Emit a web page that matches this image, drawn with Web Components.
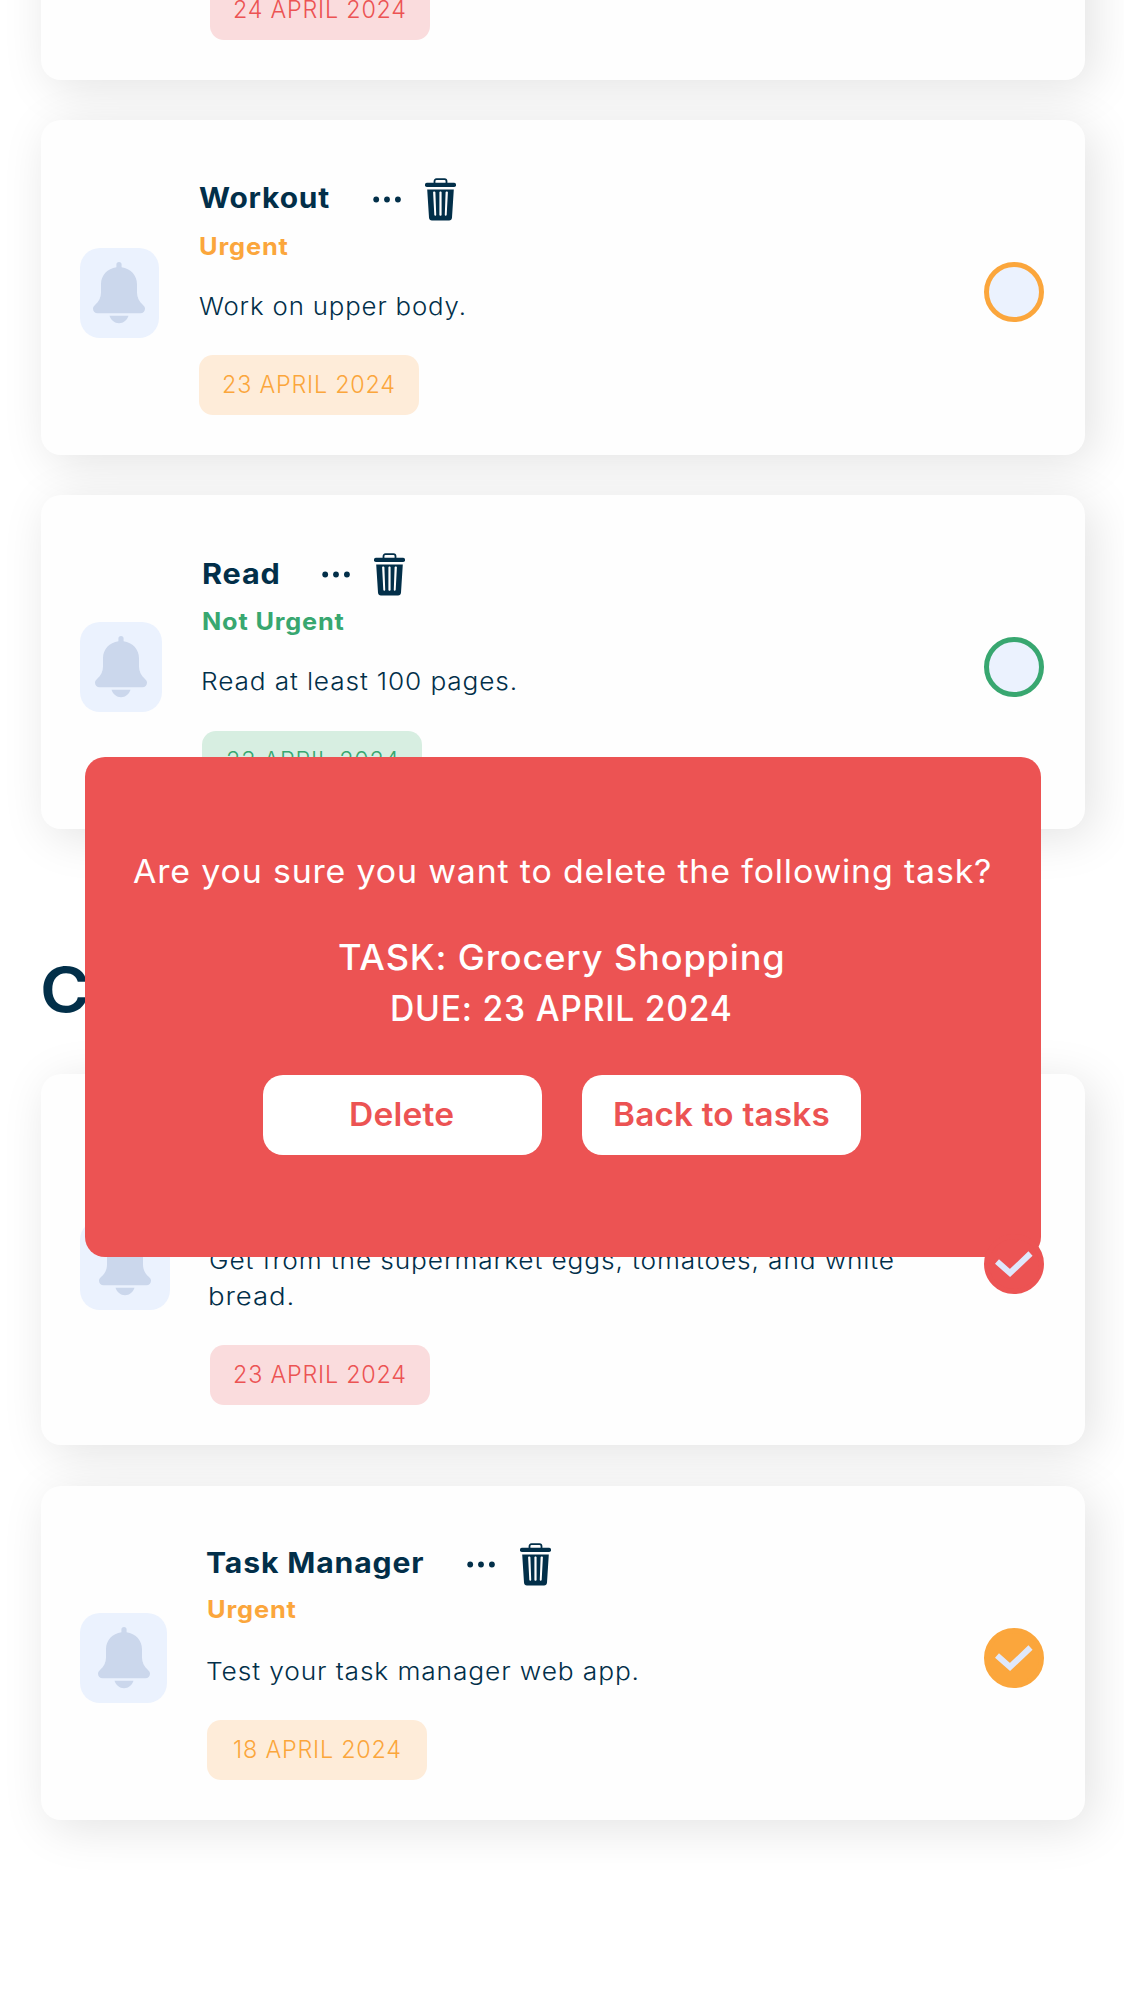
<!DOCTYPE html>
<html lang="en">
<head>
<meta charset="utf-8">
<title>Tasks</title>
<style>
  body { margin: 0; background: #fff; height: 2012px; overflow: hidden; font-family: Inter, "Open Sans", sans-serif; color: #022f49; }
</style>
</head>
<body>
<task-app></task-app>
<script>
const ctx = document.createElement('canvas').getContext('2d');

/* A line of text widened so that its ink spans the given width: light tracking first, the rest by stretching. */
class FitText extends HTMLElement {
  connectedCallback() {
    const size = +this.getAttribute('size'), weight = this.getAttribute('weight') || 400;
    const width = +this.getAttribute('width'), line = this.getAttribute('line') || size * 1.5;
    const gap = +(this.getAttribute('track') || 0.8);
    const text = this.textContent;
    ctx.font = `${weight} ${size}px Inter, "Open Sans", sans-serif`;
    const m = ctx.measureText(text);
    const ink = m.actualBoundingBoxLeft + m.actualBoundingBoxRight + gap * (text.length - 1);
    const scale = width ? width / ink : 1.1;
    this.attachShadow({ mode: 'open' }).innerHTML = `<style>
      :host { display: block; flex: none; white-space: nowrap; ${width ? `width: ${width}px;` : ''}
        font-size: ${size}px; font-weight: ${weight}; line-height: ${line}px; letter-spacing: ${gap}px; }
      span { display: inline-block; vertical-align: top; transform-origin: 0 50%; transform: scaleX(${scale}); margin-left: ${m.actualBoundingBoxLeft * scale}px; }
    </style><span><slot></slot></span>`;
  }
}
customElements.define('fit-text', FitText);

class BellTile extends HTMLElement {
  connectedCallback() {
    this.attachShadow({ mode: 'open' }).innerHTML = `<style>
      :host { display: flex; flex: none; align-items: center; justify-content: center; height: 90px; border-radius: 20px; background: #ebf2fe; }
      svg { display: block; }
    </style>
    <svg width="52" height="62" viewBox="0 0 52 62" fill="#cbd7ec">
      <path d="M26 0a2.600 2.600 0 0 1 2.600 2.600V5.300C37.500 6.500 44 13.500 44 22v8.500c0 5 2 9 6 12.500 1.300 1.200 2 2.400 2 3.800 0 2.500-2 4.500-4.500 4.500h-43A4.500 4.500 0 0 1 0 46.800c0-1.400.7-2.600 2-3.800 4-3.500 6-7.500 6-12.500V22C8 13.500 14.500 6.500 23.400 5.300V2.600A2.600 2.600 0 0 1 26 0z"/>
      <path d="M16.500 53.800h19c-1.300 4.300-5 7.500-9.500 7.500s-8.200-3.200-9.500-7.500z"/>
    </svg>`;
  }
}
customElements.define('bell-tile', BellTile);

class TaskTools extends HTMLElement {
  connectedCallback() {
    this.attachShadow({ mode: 'open' }).innerHTML = `<style>
      :host { display: flex; flex: none; align-items: center; gap: 24.500px; height: 43px; }
      svg { display: block; }
      .dots { margin-top: 1.500px; }
      .bin { margin-top: 1px; }
    </style>
    <svg class="dots" width="28" height="7" viewBox="0 0 28 7" fill="currentColor"><circle cx="3.200" cy="3.500" r="2.900"/><circle cx="14" cy="3.500" r="2.900"/><circle cx="24.900" cy="3.500" r="2.900"/></svg>
    <svg class="bin" width="31" height="43" viewBox="0 0 31 43" fill="currentColor">
      <path d="M9.500 5.500V3.200C9.500 2 10.200 1.200 11.500 1.200h8c1.300 0 2 .8 2 2v2.300" fill="none" stroke="currentColor" stroke-width="1.800"/>
      <rect x="0" y="4.800" width="31" height="4.200" rx="1.800"/>
      <path fill-rule="evenodd" d="M2.200 11.500h26.600L27 39.500c-.1 2-1.200 3-3 3H7c-1.800 0-2.900-1-3-3zM8.100 14.300l1.200 22.500c.1 1.300 1.900 1.300 1.900 0l-.8-22.500c-.1-1-2.300-1-2.300 0zM14.400 14.300v22.500c0 1.300 2.200 1.300 2.200 0V14.300c0-1-2.200-1-2.200 0zM20.600 14.300l-.8 22.500c0 1.300 1.800 1.300 1.900 0l1.200-22.500c0-1-2.200-1-2.300 0z"/>
    </svg>`;
  }
}
customElements.define('task-tools', TaskTools);

class TaskCheck extends HTMLElement {
  connectedCallback() {
    const done = this.hasAttribute('done');
    this.attachShadow({ mode: 'open' }).innerHTML = `<style>
      :host { display: block; flex: none; box-sizing: border-box; width: 60px; height: 60px; margin-left: auto; border-radius: 50%;
        border: 5px solid var(--tone); background: ${done ? 'var(--tone)' : '#ebf2fe'}; position: relative; z-index: 3; }
      svg { display: block; margin: -5px; }
    </style>${done ? `<svg width="60" height="60" viewBox="0 0 60 60" fill="none" stroke="#dfe8fb" stroke-width="6"><path d="M13 27.500 26 39 46.500 19.500"/></svg>` : ''}`;
  }
}
customElements.define('task-check', TaskCheck);

class TaskCard extends HTMLElement {
  connectedCallback() {
    const a = n => this.getAttribute(n);
    this.attachShadow({ mode: 'open' }).innerHTML = `<style>
      :host { display: flex; flex: none; box-sizing: border-box; width: 1044px; height: ${a('height')}px; margin-bottom: ${a('gap') || 0}px;
        border-radius: 20px; background: #fefefe; box-shadow: 8px 8px 48px rgba(0,0,0,.115); padding: 0 41px 0 39px; align-items: center; }
      bell-tile { width: ${a('tile')}px; margin-top: 10px; }
      task-check { margin-top: 9.500px; }
      .body { display: flex; flex-direction: column; justify-content: flex-end; align-self: stretch; align-items: flex-start; padding-bottom: ${a('foot') || 40}px; margin-left: ${a('indent')}px; }
      .pill { display: flex; justify-content: center; align-items: center; box-sizing: border-box; width: 220px; height: 60px; margin-top: 30.500px;
        border-radius: 14px; background: var(--tint); color: var(--tone); }
    </style>
    <bell-tile></bell-tile>
    <div class="body"><slot></slot>
      <div class="pill"><fit-text size="24" weight="340" width="${a('datewidth') || 171}" line="36">${a('date')}</fit-text></div>
    </div>
    <task-check ${this.hasAttribute('done') ? 'done' : ''}></task-check>`;
  }
}
customElements.define('task-card', TaskCard);

class DeleteDialog extends HTMLElement {
  connectedCallback() {
    this.attachShadow({ mode: 'open' }).innerHTML = `<style>
      :host { position: absolute; left: 85px; top: 756.600px; z-index: 2; box-sizing: border-box; width: 955.500px; height: 500px;
        border-radius: 20px; background: #ec5353; color: #fff; display: flex; flex-direction: column; align-items: center; padding-top: 91.400px; }
      .ask, .detail { margin-right: 3px; }
      .detail { display: flex; flex-direction: column; align-items: center; margin-top: 36.500px; }
      .actions { display: flex; gap: 40.500px; margin: 41px 1.500px 0 0; }
      button { all: unset; box-sizing: border-box; display: flex; align-items: center; justify-content: center; width: 279px; height: 80px; border-radius: 20px; background: #fff; color: #ec5353; }
    </style>
    <fit-text class="ask" size="32" weight="400" width="857" line="48">Are you sure you want to delete the following task?</fit-text>
    <div class="detail">
      <fit-text size="35" weight="500" width="444" line="51">TASK: Grocery Shopping</fit-text>
      <fit-text size="35" weight="500" width="339" line="51">DUE: 23 APRIL 2024</fit-text>
    </div>
    <div class="actions">
      <button><fit-text size="32" weight="600" width="102" line="48" track="0.200">Delete</fit-text></button>
      <button><fit-text size="32" weight="600" width="214" line="48" track="0.200">Back to tasks</fit-text></button>
    </div>`;
  }
}
customElements.define('delete-dialog', DeleteDialog);

class TaskApp extends HTMLElement {
  connectedCallback() {
    this.attachShadow({ mode: 'open' }).innerHTML = `<style>
      :host { display: block; position: relative; height: 2012px; overflow: hidden; }
      main { display: flex; flex-direction: column; padding-left: 41px; margin-top: -255.600px; }
      .row { display: flex; align-items: center; }
      .row fit-text { padding-top: 0.500px; }
      .level { margin: 9.500px 0 25px 1px; color: var(--tone); }
      .in { margin-left: 1px; }
      .red { --tone: #ec5353; --tint: #fadcdd; }
      .orange { --tone: #fba63c; --tint: #feecd9; }
      .green { --tone: #38a770; --tint: #d7eee1; }
      .heading { display: flex; flex: none; align-items: flex-start; height: 244.600px; box-sizing: border-box; padding: 115px 0 0 2px; }
    </style>
    <main>
      <task-card class="red" height="335.600" gap="39.800" tile="90" indent="39.500" date="24 APRIL 2024"></task-card>
      <task-card class="orange" height="335.600" gap="39.500" tile="78.500" indent="40.300" date="23 APRIL 2024">
        <div class="row"><fit-text size="28" weight="700" width="130" line="43">Workout</fit-text><task-tools style="margin-left:44px"></task-tools></div>
        <fit-text class="level" size="24" weight="700" width="88" line="34">Urgent</fit-text>
        <fit-text size="24" weight="340" width="265" line="36">Work on upper body.</fit-text>
      </task-card>
      <task-card class="green" height="334.600" foot="38.700" tile="81.500" indent="40.500" date="23 APRIL 2024">
        <div class="row"><fit-text class="in" size="28" weight="700" width="75" line="43">Read</fit-text><task-tools style="margin-left:43.500px"></task-tools></div>
        <fit-text class="level" size="24" weight="700" width="141" line="34">Not Urgent</fit-text>
        <fit-text class="in" size="24" weight="340" width="312" line="36">Read at least 100 pages.</fit-text>
      </task-card>
      <div class="heading"><fit-text size="61.500" weight="600" line="92">Completed</fit-text></div>
      <task-card class="red" done height="371" foot="40" gap="40.500" tile="90" indent="39.500" date="23 APRIL 2024">
        <fit-text class="in" size="24" weight="340" width="683" line="36">Get from the supermarket eggs, tomatoes, and white</fit-text>
        <fit-text class="in" size="24" weight="340" width="82" line="36">bread.</fit-text>
      </task-card>
      <task-card class="orange" done height="334.500" foot="39.800" tile="87" indent="40" date="18 APRIL 2024" datewidth="166">
        <div class="row"><fit-text size="28" weight="700" width="216" line="43">Task Manager</fit-text><task-tools style="margin-left:44px"></task-tools></div>
        <fit-text class="level" style="margin:8px 0 26.500px 1px" size="24" weight="700" width="88" line="34">Urgent</fit-text>
        <fit-text size="24" weight="340" width="430" line="36">Test your task manager web app.</fit-text>
      </task-card>
    </main>
    <delete-dialog></delete-dialog>`;
  }
}
customElements.define('task-app', TaskApp);
</script>
</body>
</html>
